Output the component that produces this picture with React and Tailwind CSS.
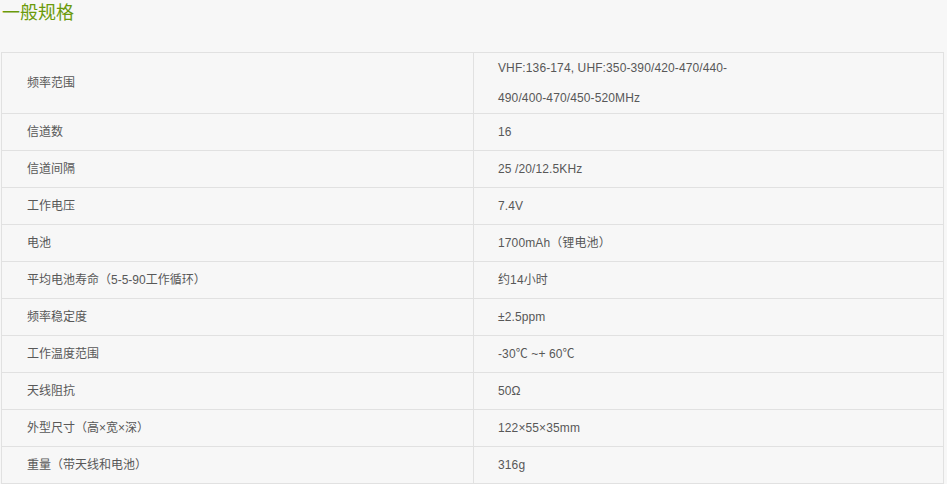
const rows = [
  ['信道数', '16'],
  ['信道间隔', '25 /20/12.5KHz'],
  ['工作电压', '7.4V'],
  ['电池', '1700mAh（锂电池）'],
  ['平均电池寿命（5-5-90工作循环）', '约14小时'],
  ['频率稳定度', '±2.5ppm'],
  ['工作温度范围', '-30℃ ~+ 60℃'],
  ['天线阻抗', '50Ω'],
  ['外型尺寸（高×宽×深）', '122×55×35mm'],
  ['重量（带天线和电池）', '316g'],
];

export default function App() {
  return (
    <div className="w-[947px] h-[484px] bg-[#f7f7f7] overflow-hidden font-['Liberation_Sans','Noto_Sans_CJK_SC',sans-serif] text-[#585858]">
      <div className="h-[52px] pl-[2px] text-[18px] leading-[26px] text-[#6b9a0a]">一般规格</div>

      <div className="ml-px w-[943px] border-l border-r border-t border-[#e1e1e1] text-[12px] leading-[30px]">
        <div className="flex h-[61px] border-b border-[#e1e1e1]">
          <div className="w-[472px] border-r border-[#e1e1e1] pl-[25px] flex items-center">频率范围</div>
          <div className="flex-1 pl-[24px] flex flex-col justify-center tracking-[0.12px]">
            <div>VHF:136-174, UHF:350-390/420-470/440-</div>
            <div>490/400-470/450-520MHz</div>
          </div>
        </div>
        {rows.map(([k, v]) => (
          <div key={k} className="flex h-[37px] border-b border-[#e1e1e1]">
            <div className="w-[472px] border-r border-[#e1e1e1] pl-[25px] flex items-center">{k}</div>
            <div className="flex-1 pl-[24px] flex items-center tracking-[0.12px]">{v}</div>
          </div>
        ))}
      </div>
    </div>
  );
}
